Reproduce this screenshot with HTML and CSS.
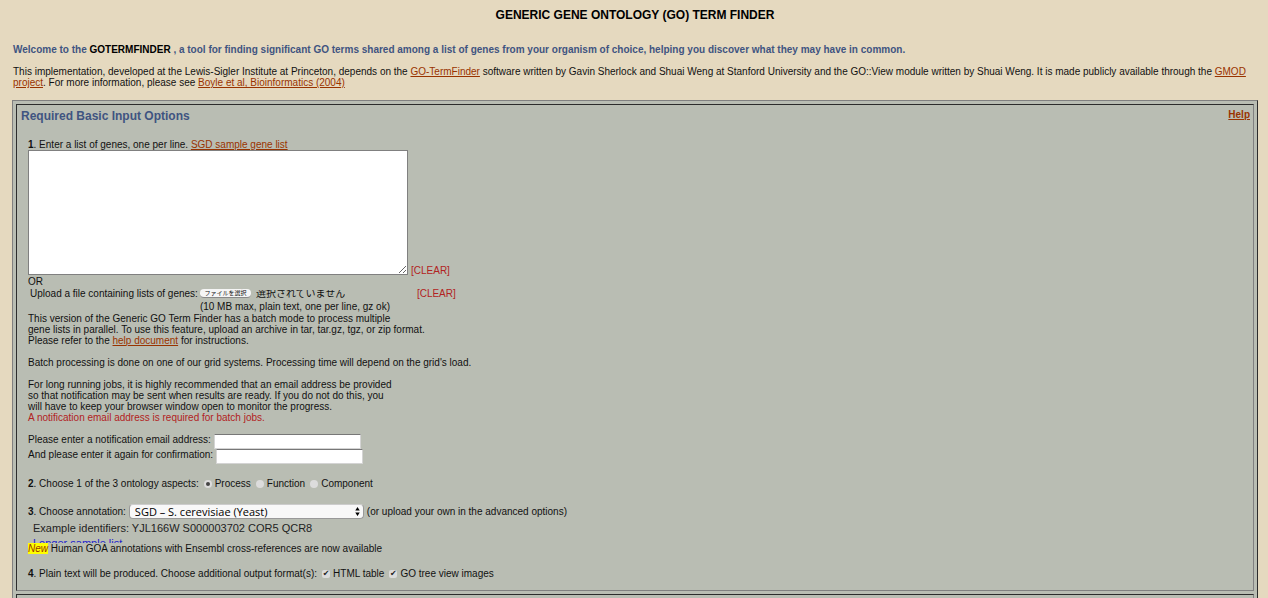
FILE: index.html
```
<!DOCTYPE html>
<html lang="en">
<head>
<meta charset="utf-8">
<title>Generic Gene Ontology (GO) Term Finder</title>
<link rel="stylesheet" href="styles.css">
</head>
<body>
<div class="page">
<header class="intro">
<h1 class="title">GENERIC GENE ONTOLOGY (GO) TERM FINDER</h1>
<p class="welcome">Welcome to the <span class="name">GOTERMFINDER</span> , a tool for finding significant GO terms shared among a list of genes from your organism of choice, helping you discover what they may have in common.</p>
<p class="about">This implementation, developed at the Lewis-Sigler Institute at Princeton, depends on the <a href="#">GO-TermFinder</a> software written by Gavin Sherlock and Shuai Weng at Stanford University and the GO::View module written by Shuai Weng. It is made publicly available through the <a href="#">GMOD project</a>. For more information, please see <a href="#">Boyle et al, Bioinformatics (2004)</a></p>
</header>
<form class="frame">
<section class="panel">
<div class="panel-head"><h2>Required Basic Input Options</h2><a class="help" href="#">Help</a></div>
<div class="fields">
<div class="genes">
<div><label for="genes"><b>1</b>. Enter a list of genes, one per line.</label> <a href="#">SGD sample gene list</a></div>
<div class="area-row"><textarea id="genes" class="area"></textarea><button type="button" class="clear">[CLEAR]</button></div>
<div>OR</div>
</div>
<div class="upload">
<label for="upload">Upload a file containing lists of genes:</label>
<div class="file"><span class="file-button">ファイルを選択</span><span class="file-name">選択されていません</span><input id="upload" class="file-input" type="file"></div>
<button type="button" class="clear">[CLEAR]</button>
<div class="file-note">(10 MB max, plain text, one per line, gz ok)</div>
</div>
<p>This version of the Generic GO Term Finder has a batch mode to process multiple<br>gene lists in parallel. To use this feature, upload an archive in tar, tar.gz, tgz, or zip format.<br>Please refer to the <a href="#">help document</a> for instructions.</p>
<p>Batch processing is done on one of our grid systems. Processing time will depend on the grid's load.</p>
<p>For long running jobs, it is highly recommended that an email address be provided<br>so that notification may be sent when results are ready. If you do not do this, you<br>will have to keep your browser window open to monitor the progress.<br><span class="required">A notification email address is required for batch jobs.</span></p>
<div class="emails">
<div class="email"><label for="email">Please enter a notification email address:</label><input id="email" type="text"></div>
<div class="email"><label for="email2">And please enter it again for confirmation:</label><input id="email2" type="text"></div>
</div>
<div class="options aspects">
<span class="lead"><b>2</b>. Choose 1 of the 3 ontology aspects:</span>
<label><input type="radio" name="aspect" checked>Process</label>
<label><input type="radio" name="aspect">Function</label>
<label><input type="radio" name="aspect">Component</label>
</div>
<div class="annotation">
<label for="annotation"><b>3</b>. Choose annotation:</label>
<div class="select-wrap"><select id="annotation"><option>SGD – S. cerevisiae (Yeast)</option></select><svg class="arrows" viewBox="0 0 5 10"><path d="M2.5 0 5 4H0zM0 6h5L2.5 10z"/></svg></div>
<span>(or upload your own in the advanced options)</span>
</div>
<div class="sample"><div>Example identifiers: YJL166W S000003702 COR5 QCR8</div><a href="#">Longer sample list</a></div>
<div class="news"><em>New</em> Human GOA annotations with Ensembl cross-references are now available</div>
<div class="options formats">
<span class="lead"><b>4</b>. Plain text will be produced. Choose additional output format(s):</span>
<label><input type="checkbox" checked>HTML table</label>
<label><input type="checkbox" checked>GO tree view images</label>
</div>
</div>
</section>
<section class="panel next"></section>
</form>
</div>
</body>
</html>
```
FILE: styles.css
```
* { box-sizing: border-box; }
body {
  margin: 0;
  background: #e5d9bf;
  color: #111;
  font: 10px/11px "Liberation Sans", Arial, "Noto Sans CJK JP", sans-serif;
}
h1, h2, p { margin: 0; }
a { color: #993300; }
.page { height: 100vh; overflow: hidden; padding: 8px 10px 0 12px; }
.intro { padding: 0 1px; }
.title { font-size: 12px; line-height: 14px; text-align: center; color: #000; }
.welcome { margin-top: 22px; font-weight: bold; color: #3f5481; }
.name { color: #000; }
.about { margin-top: 11px; }
.frame {
  margin-top: 12px;
  padding: 3px;
  background: #b9bdb3;
  border: 1px solid;
  border-color: #808080 #2c2c2c #2c2c2c #808080;
}
.panel {
  border: 1px solid;
  border-color: #2c2c2c #808080 #808080 #2c2c2c;
}
.next { margin-top: 3px; min-height: 40px; }
.panel-head { display: flex; justify-content: space-between; padding: 4px 3px 0 4px; }
.panel-head h2 { font-size: 12px; line-height: 14px; color: #3f5481; }
.help { font-weight: bold; line-height: 12px; }
.fields { padding: 16px 11px 10px; }
.fields p { margin-bottom: 11px; }
.area-row { display: flex; align-items: flex-end; gap: 3px; }
.area-row .clear { line-height: 9px; }
.area {
  display: block;
  width: 380px;
  height: 125px;
  border: 1px solid #808080;
  background: #fff;
}
.genes > :last-child { padding-top: 1px; }
.clear {
  padding: 0;
  border: 0;
  background: none;
  color: #b22222;
  font: inherit;
}
.upload {
  display: grid;
  grid-template-columns: auto 215px auto;
  justify-content: start;
  column-gap: 2px;
  padding-left: 2px;
}
.upload > * { line-height: 13px; }
.file { position: relative; display: flex; gap: 5px; height: 13px; overflow: hidden; align-items: center; }
.file-button {
  width: 51px;
  height: 9px;
  border-radius: 4px;
  background: #f5f5f5;
  border-bottom: 1px solid #888;
  font-size: 6px;
  line-height: 8px;
  text-align: center;
}
.file-name { height: 8px; overflow: hidden; font-size: 10px; line-height: 8px; }
.file-input { position: absolute; inset: 0; width: 100%; opacity: 0; }
.file-note { grid-column: 2 / 4; }
.required { color: #b22222; }
.email { display: flex; gap: 3px; line-height: 11px; height: 15px; }
.email input {
  width: 147px;
  height: 15px;
  border: 1px solid #d4d4d4;
  border-top-color: #777;
  background: #fff;
}
.options { display: flex; align-items: center; gap: 5px; line-height: 12px; }
.options label { display: flex; align-items: center; gap: 3px; }
.options input {
  appearance: none;
  display: grid;
  place-items: center;
  width: 8px;
  height: 8px;
  margin: 0;
  background: #dcdcdc;
}
.options input[type="radio"] { border-radius: 4px; }
.options input[type="radio"]:checked::before { content: ""; width: 4px; height: 4px; border-radius: 2px; background: #444; }
.options input[type="checkbox"] { border-radius: 2px; }
.options input[type="checkbox"]:checked::before { content: "✔"; font: 8px/8px "DejaVu Sans", sans-serif; color: #222; }
.aspects { padding-top: 14px; }
.annotation { display: flex; align-items: center; gap: 3px; padding-top: 14px; }
.select-wrap { position: relative; }
.select-wrap select {
  appearance: none;
  display: block;
  width: 235px;
  height: 15px;
  padding: 0 5px;
  border: 1px solid #999;
  border-top-color: #ccc;
  border-radius: 4px;
  background: #f8f8f8;
  color: #000;
  font: 11px/13px "Open Sans", sans-serif;
}
.arrows { position: absolute; right: 4px; top: 3px; width: 5px; height: 9px; pointer-events: none; }
.sample {
  height: 24px;
  overflow: hidden;
  padding: 2px 5px 0;
  font-size: 11px;
  line-height: 15px;
  color: #222;
}
.sample a { color: #2222cc; text-decoration: none; }
.news em { background: #ff0; color: #993300; }
.formats { padding-top: 14px; }
```
